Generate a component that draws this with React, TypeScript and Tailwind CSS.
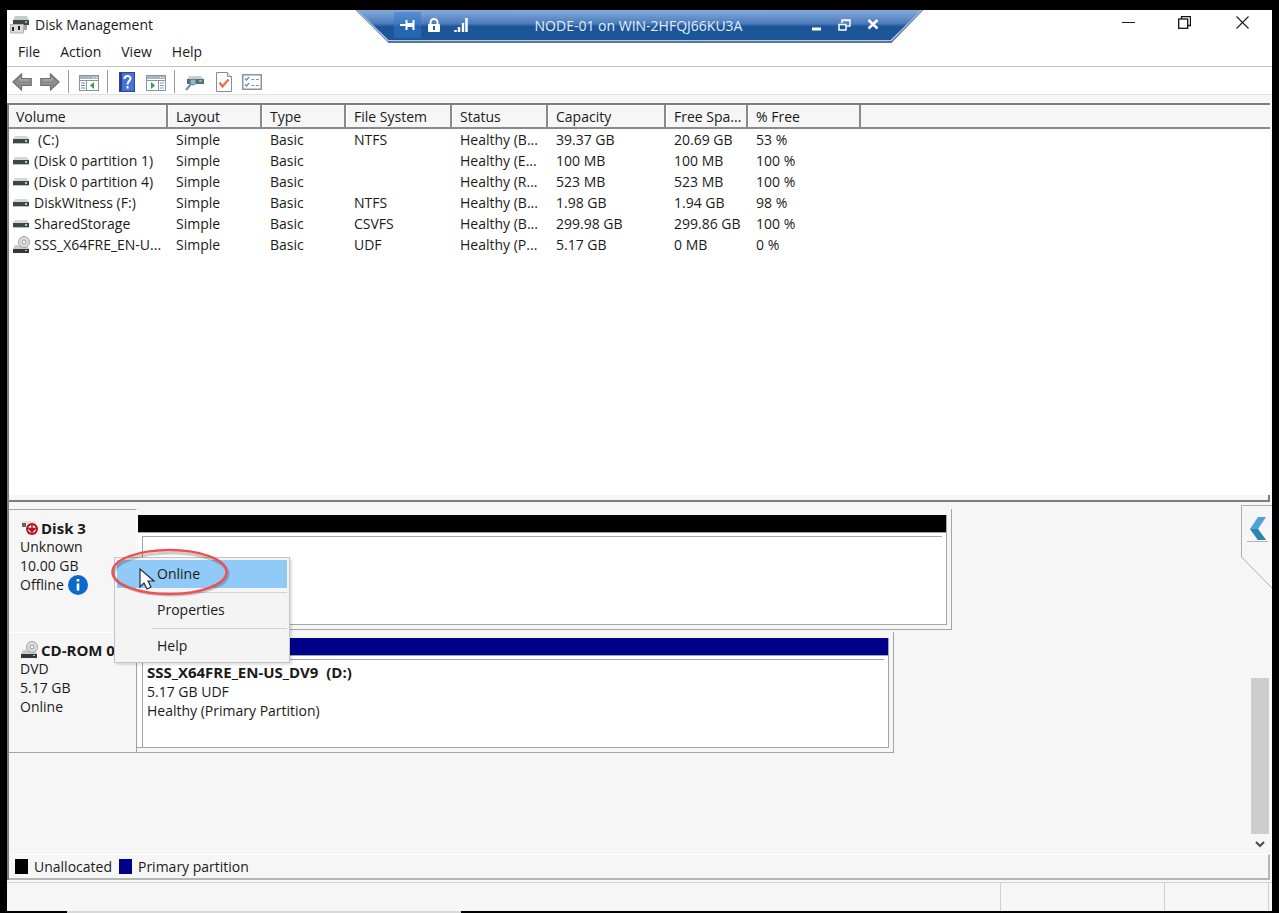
import type { ReactNode } from "react";

type Volume = {
  name: string;
  kind: "disk" | "cd";
  indent?: boolean;
  cells: string[];
};

const columns = ["Volume", "Layout", "Type", "File System", "Status", "Capacity", "Free Spa...", "% Free"];

const volumes: Volume[] = [
  { name: "(C:)", kind: "disk", indent: true, cells: ["Simple", "Basic", "NTFS", "Healthy (B...", "39.37 GB", "20.69 GB", "53 %"] },
  { name: "(Disk 0 partition 1)", kind: "disk", cells: ["Simple", "Basic", "", "Healthy (E...", "100 MB", "100 MB", "100 %"] },
  { name: "(Disk 0 partition 4)", kind: "disk", cells: ["Simple", "Basic", "", "Healthy (R...", "523 MB", "523 MB", "100 %"] },
  { name: "DiskWitness (F:)", kind: "disk", cells: ["Simple", "Basic", "NTFS", "Healthy (B...", "1.98 GB", "1.94 GB", "98 %"] },
  { name: "SharedStorage", kind: "disk", cells: ["Simple", "Basic", "CSVFS", "Healthy (B...", "299.98 GB", "299.86 GB", "100 %"] },
  { name: "SSS_X64FRE_EN-U...", kind: "cd", cells: ["Simple", "Basic", "UDF", "Healthy (P...", "5.17 GB", "0 MB", "0 %"] },
];

function DriveIcon() {
  return (
    <svg width="18" height="18" viewBox="0 0 18 18" aria-hidden="true">
      <path d="M3 5h12l2 3H1z" fill="#d6d8d7" />
      <rect x="1" y="8" width="16" height="4" fill="#3f4644" />
      <rect x="1" y="12" width="16" height="1" fill="#b9bdbb" />
      <rect x="13" y="9" width="2" height="2" fill="#8fe0ad" />
    </svg>
  );
}

function CdIcon() {
  return (
    <svg width="18" height="18" viewBox="0 0 18 18" aria-hidden="true">
      <path d="M3 9h12l2 4H1z" fill="#c9cbca" />
      <circle cx="12" cy="6" r="5.500" fill="#dcdcdc" stroke="#a3a3a3" />
      <circle cx="12" cy="6" r="2" fill="#f7f7f7" stroke="#9a9a9a" />
      <rect x="1" y="13" width="16" height="4" fill="#333837" />
      <rect x="13" y="14" width="2" height="1" fill="#8fe0ad" />
    </svg>
  );
}

function AppIcon() {
  return (
    <svg width="20" height="20" viewBox="0 0 20 20" aria-hidden="true">
      <path d="M6 1h12l2 5H4z" fill="#c3cbc8" />
      <rect x="4" y="5" width="16" height="5" fill="#3f4745" />
      <rect x="16" y="6" width="2" height="2" fill="#5fcf8c" />
      <rect x="14" y="10" width="4" height="5" fill="#a5a5a5" />
      <path d="M1.500 9.500h13v8.500h-13z" fill="#dcdcdc" stroke="#b0b0b0" />
      <rect x="3" y="12" width="2" height="4" fill="#222" />
      <rect x="9" y="11" width="2" height="4" fill="#222" />
    </svg>
  );
}

function OfflineIcon() {
  return (
    <svg width="18" height="16" viewBox="0 0 18 16" aria-hidden="true">
      <path d="M3 1h12l1 3H1z" fill="#e2e2e2" />
      <rect x="2" y="3" width="4" height="4" fill="#666" />
      <circle cx="12" cy="9" r="6" fill="#b3161b" />
      <circle cx="12" cy="9" r="3.800" fill="#fff" />
      <path d="M12 5v6M9 8.500l3 3.500 3-3.500z" fill="#b3161b" stroke="#b3161b" strokeWidth="1.500" />
    </svg>
  );
}

function ArrowIcon({ right = false }: { right?: boolean }) {
  return (
    <svg width="20" height="18" viewBox="0 0 20 18" aria-hidden="true">
      <path
        d={right ? "M19 9 10.500 1v4.500H.8v7h9.700V17z" : "M1 9 9.500 1v4.500h9.700v7H9.500V17z"}
        fill="#8e8e8e"
        stroke="#707070"
        strokeWidth="1.200"
      />
      <path d={right ? "M2 7h10V5" : "M8 5v2h10"} fill="none" stroke="#b9b9b9" />
    </svg>
  );
}

function PaneIcon({ right = false }: { right?: boolean }) {
  return (
    <svg width="20" height="18" viewBox="0 0 20 18" aria-hidden="true">
      <rect x=".5" y="1.500" width="19" height="15" fill="#fff" stroke="#8b95a0" />
      <rect x="1" y="2" width="18" height="3" fill="#aab5c0" />
      <path d="M14 3.500h1M17 3.500h1" stroke="#fff" />
      <path d="M1 6.500h18" stroke="#8b95a0" />
      {right ? (
        <>
          <path d="M12.500 7v9" stroke="#8b95a0" />
          <path d="M14 9h4M14 11.500h4M14 14h4" stroke="#7f9cc0" />
          <path d="M5 8v7l4-3.500z" fill="#35a635" />
        </>
      ) : (
        <>
          <path d="M7.500 7v9" stroke="#8b95a0" />
          <path d="M2 9h4M2 11.500h4M2 14h4" stroke="#5d86c0" />
          <path d="M15 8v7l-4-3.500z" fill="#35a635" />
        </>
      )}
    </svg>
  );
}

function HelpIcon() {
  return (
    <svg width="16" height="20" viewBox="0 0 16 20" aria-hidden="true">
      <rect x=".5" y=".5" width="15" height="19" fill="#4a72d6" stroke="#2b459b" />
      <rect x="1" y="1" width="2" height="18" fill="#243f96" />
      <path d="M5.500 7c0-4 6-4 6-.5 0 2.500-3 2.500-3 6" fill="none" stroke="#fff" strokeWidth="2" />
      <rect x="7.500" y="14" width="2" height="2.500" fill="#fff" />
    </svg>
  );
}

function RescanIcon() {
  return (
    <svg width="20" height="18" viewBox="0 0 20 18" aria-hidden="true">
      <path d="M4 2h12l3 4H2z" fill="#cbd0d0" />
      <rect x="2" y="5" width="17" height="5" fill="#5a6a70" />
      <rect x="14" y="6" width="3" height="2" fill="#63d294" />
      <circle cx="8" cy="8" r="3" fill="#8fb8cc" stroke="#60869c" />
      <path d="M6 10l-5 6" stroke="#7690a0" strokeWidth="2" />
    </svg>
  );
}

function CheckPageIcon() {
  return (
    <svg width="16" height="20" viewBox="0 0 16 20" aria-hidden="true">
      <path d="M.5.5h11l4 4v15H.5z" fill="#fff" stroke="#8c8c8c" />
      <path d="M11.500.5v4h4" fill="#eee" stroke="#8c8c8c" />
      <path d="M3.500 10.500l3 4 6-7" fill="none" stroke="#e8703a" strokeWidth="2.200" />
    </svg>
  );
}

function ListIcon() {
  return (
    <svg width="20" height="16" viewBox="0 0 20 16" aria-hidden="true">
      <rect x=".75" y=".75" width="18.500" height="14.500" fill="#fff" stroke="#8494a3" strokeWidth="1.500" />
      <path d="M3 4.500l1.500 1.500L7 3M3 10.500l1.500 1.500L7 9" fill="none" stroke="#5b8ac4" strokeWidth="1.200" />
      <path d="M9.500 5.500h3M14 5.500h3M9.500 11.500h3M14 11.500h3" stroke="#8a96a2" />
    </svg>
  );
}

function IconButton({ label, className = "", children }: { label: string; className?: string; children: ReactNode }) {
  return (
    <button type="button" aria-label={label} className={`flex items-center justify-center ${className}`}>
      {children}
    </button>
  );
}

function ConnectionBar() {
  return (
    <div className="absolute top-0 left-1/2 h-[33px] w-[568px] -translate-x-1/2 bg-[#55779f] [clip-path:polygon(0_0,100%_0,536px_100%,33px_100%)]">
      <div className="h-[31px] bg-[#b7c8de] [clip-path:polygon(1px_0,567px_0,536px_100%,32px_100%)]">
        <div className="flex h-[30px] items-center bg-linear-to-b from-[#86abdb] via-[#4a7cbc] via-45% to-[#1d5599] to-55% pr-[36px] pl-[38px] text-white [clip-path:polygon(2px_0,566px_0,535px_100%,33px_100%)]">
          <IconButton label="Pin" className="h-[26px] w-[27px] bg-[#2f77c9]/50">
            <svg width="15" height="12" viewBox="0 0 15 12" aria-hidden="true">
              <path d="M0 6h6M6.500 1v10M13.500 1v10" stroke="#fff" strokeWidth="2" />
              <path d="M7 6h6" stroke="#fff" strokeWidth="4" />
            </svg>
          </IconButton>
          <IconButton label="Connection security" className="h-[26px] w-[26px]">
            <svg width="14" height="15" viewBox="0 0 14 15" aria-hidden="true">
              <path d="M3.500 7V4.500a3.500 3.500 0 0 1 7 0V7" fill="none" stroke="#fff" strokeWidth="2" />
              <rect x="1" y="6" width="12" height="8" rx="1" fill="#fff" />
              <rect x="6" y="8" width="2" height="4" fill="#2b62a6" />
            </svg>
          </IconButton>
          <IconButton label="Connection quality" className="h-[26px] w-[28px]">
            <svg width="14" height="15" viewBox="0 0 14 15" aria-hidden="true">
              <path d="M1.500 14v-2M5 14V9M9 14V5M12.500 14V0" stroke="#fff" strokeWidth="2.500" />
            </svg>
          </IconButton>
          <span className="flex-1 pt-[2px] text-center whitespace-nowrap text-[#e2edf9]">NODE-01 on WIN-2HFQJ66KU3A</span>
          <IconButton label="Minimize session" className="h-[26px] w-[28px]">
            <svg width="10" height="14" viewBox="0 0 10 14" aria-hidden="true">
              <path d="M0 11h9" stroke="#fff" strokeWidth="3" />
            </svg>
          </IconButton>
          <IconButton label="Restore session" className="h-[26px] w-[28px]">
            <svg width="13" height="13" viewBox="0 0 13 13" aria-hidden="true">
              <path d="M4 4V1h8v6H9M4 1.500h8" fill="none" stroke="#fff" strokeWidth="1.500" />
              <path d="M1 5.500h7V11H1z" fill="none" stroke="#fff" strokeWidth="1.500" />
            </svg>
          </IconButton>
          <IconButton label="Close session" className="h-[26px] w-[29px]">
            <svg width="12" height="12" viewBox="0 0 12 12" aria-hidden="true">
              <path d="M1.500 1l9 8.500M10.500 1l-9 8.500" stroke="#fff" strokeWidth="2.500" />
            </svg>
          </IconButton>
        </div>
      </div>
    </div>
  );
}

function TitleBar() {
  return (
    <header className="relative flex h-[29px] items-center bg-white">
      <div className="flex items-center gap-[6px] pl-[2px]">
        <AppIcon />
        <h1>Disk Management</h1>
      </div>
      <ConnectionBar />
      <div className="ml-auto flex pb-1">
        <IconButton label="Minimize" className="h-6 w-[56px]">
          <svg width="13" height="13" viewBox="0 0 13 13" aria-hidden="true">
            <path d="M0 6.500h13" stroke="#222" />
          </svg>
        </IconButton>
        <IconButton label="Restore" className="h-6 w-[56px]">
          <svg width="13" height="13" viewBox="0 0 13 13" aria-hidden="true">
            <path d="M3.500 3V.5h9v9H10" fill="none" stroke="#111" strokeWidth="1.300" />
            <rect x=".7" y="3" width="9" height="9.300" fill="#fff" stroke="#111" strokeWidth="1.300" />
          </svg>
        </IconButton>
        <IconButton label="Close" className="h-6 w-[60px]">
          <svg width="13" height="13" viewBox="0 0 13 13" aria-hidden="true">
            <path d="M.5.5l12 12M12.500.5l-12 12" stroke="#222" strokeWidth="1.200" />
          </svg>
        </IconButton>
      </div>
    </header>
  );
}

function Separator() {
  return <span className="h-[23px] w-px bg-[#9c9c9c]" />;
}

function Toolbar() {
  return (
    <div className="flex h-[28px] items-center border-b border-[#e2e2e2] bg-white pt-[2px] pl-[5px]">
      <IconButton label="Back"><ArrowIcon /></IconButton>
      <IconButton label="Forward" className="mx-2"><ArrowIcon right /></IconButton>
      <Separator />
      <IconButton label="Show console tree" className="mr-2 ml-[10px] pt-[2px]"><PaneIcon /></IconButton>
      <Separator />
      <IconButton label="Help" className="mr-[11px] ml-[11px]"><HelpIcon /></IconButton>
      <IconButton label="Show action pane" className="mr-2 pt-[2px]"><PaneIcon right /></IconButton>
      <Separator />
      <IconButton label="Rescan disks" className="mr-[11px] ml-[10px] pt-[2px]"><RescanIcon /></IconButton>
      <IconButton label="Properties" className="mr-[10px]"><CheckPageIcon /></IconButton>
      <IconButton label="Settings"><ListIcon /></IconButton>
    </div>
  );
}

function VolumeTable() {
  return (
    <table className="w-full table-fixed border-separate border-spacing-0 text-left leading-[21px] whitespace-nowrap">
      <colgroup>
        <col className="w-[159px]" />
        <col className="w-[94px]" />
        <col className="w-[84px]" />
        <col className="w-[106px]" />
        <col className="w-[96px]" />
        <col className="w-[118px]" />
        <col className="w-[82px]" />
        <col className="w-[113px]" />
        <col />
      </colgroup>
      <thead className="bg-[#f6f6f6]">
        <tr>
          {columns.map((name) => (
            <th key={name} scope="col" className="h-[24px] border-r-2 border-b-2 border-[#8a8a8a] p-0 pt-px pl-[7px] font-normal shadow-[inset_1px_1px_0_#fff] not-first:pl-2">
              {name}
            </th>
          ))}
          <td className="border-b-2 border-[#8a8a8a]" />
        </tr>
      </thead>
      <tbody>
        {volumes.map((v) => (
          <tr key={v.name}>
            <td className="h-[21px] p-0 pl-[3px]">
              <span className="flex h-[21px] items-center gap-1">
                {v.kind === "cd" ? <CdIcon /> : <DriveIcon />}
                <span className={v.indent ? "pl-1" : ""}>{v.name}</span>
              </span>
            </td>
            {v.cells.map((cell, i) => (
              <td key={i} className="p-0 pl-2">{cell}</td>
            ))}
            <td />
          </tr>
        ))}
      </tbody>
    </table>
  );
}

type DiskHeaderProps = { icon: ReactNode; title: string; lines: string[]; className: string; children?: ReactNode };

function DiskHeader({ icon, title, lines, className, children }: DiskHeaderProps) {
  return (
    <div className={`w-[128px] shrink-0 border-r pl-[11px] leading-[19px] ${className}`}>
      <div className="flex h-[18px] items-center gap-[3px] text-[15px] font-bold whitespace-nowrap">
        {icon}
        {title}
      </div>
      {lines.map((l, i) => (
        <div key={l} className="flex items-center gap-1">
          {l}
          {i === lines.length - 1 && children}
        </div>
      ))}
    </div>
  );
}

function Partition({ className, barClassName, children }: { className: string; barClassName: string; children?: ReactNode }) {
  return (
    <div className={`border-r border-b border-[#a5a5a5] pt-[6px] pr-1 pb-1 ${className}`}>
      <div className="flex h-full flex-col border-r border-b border-[#a5a5a5] pl-px">
        <div className={`h-[18px] border-b border-[#a5a5a5] ${barClassName}`} />
        <div className="flex-1 bg-white pt-[3px] pr-1 pl-1">
          <div className="h-full border-t border-l border-[#a5a5a5] pt-[3px] pl-1 leading-[19px]">{children}</div>
        </div>
      </div>
    </div>
  );
}

function ContextMenu() {
  return (
    <div role="menu" className="absolute top-[55px] left-[105px] flex h-[106px] w-[176px] flex-col border border-[#c4c4c4] bg-[#f4f4f4] p-[2px] shadow-[2px_2px_2px_rgba(0,0,0,0.12)]">
      <button type="button" role="menuitem" className="h-[28px] bg-[#91c9f7] pl-[40px] text-left">Online</button>
      <div className="mt-1 mb-[2px] ml-[35px] h-px bg-[#d2d2d2]" />
      <button type="button" role="menuitem" className="h-[29px] pl-[40px] text-left">Properties</button>
      <div className="mt-1 mb-[2px] ml-[35px] h-px bg-[#d2d2d2]" />
      <button type="button" role="menuitem" className="h-[29px] pl-[40px] text-left">Help</button>
      <svg className="pointer-events-none absolute -top-[12px] -left-[6px]" width="122" height="52" viewBox="0 0 122 52" aria-hidden="true">
        <ellipse cx="62" cy="28" rx="57" ry="21" fill="none" stroke="#000" strokeOpacity=".2" strokeWidth="3" />
        <path d="M31 23v18l4-4 3 6 4-2-3-6h6z" fill="#fff" stroke="#1f2d3d" strokeWidth="1.200" />
        <ellipse cx="60.500" cy="26" rx="57" ry="22" fill="none" stroke="#ee5053" strokeWidth="2.500" />
      </svg>
    </div>
  );
}

function DiskPane() {
  return (
    <section aria-label="Disks" className="relative flex h-[352px] pt-[7px]">
      <div className="min-w-0 flex-1">
        <div className="flex h-[121px]">
          <DiskHeader
            icon={<OfflineIcon />}
            title="Disk 3"
            lines={["Unknown", "10.00 GB", "Offline"]}
            className="border-t border-t-[#a5a5a5] border-r-white pt-[9px]"
          >
            <svg width="20" height="20" viewBox="0 0 20 20" className="-my-1" aria-hidden="true">
              <circle cx="10" cy="10" r="10" fill="#0c69cc" />
              <path d="M10 8.500v7M10 4v2.500" stroke="#fff" strokeWidth="2.600" />
            </svg>
          </DiskHeader>
          <Partition className="w-[815px]" barClassName="bg-black" />
        </div>
        <div className="mt-[2px] flex h-[121px]">
          <DiskHeader
            icon={<CdIcon />}
            title="CD-ROM 0"
            lines={["DVD", "5.17 GB", "Online"]}
            className="border-t border-b border-t-white border-r-[#a5a5a5] border-b-[#a5a5a5] pt-[8px]"
          />
          <Partition className="w-[757px]" barClassName="bg-[#00008b]">
            <p className="text-[15px] font-bold whitespace-pre">SSS_X64FRE_EN-US_DV9  (D:)</p>
            <p>5.17 GB UDF</p>
            <p>Healthy (Primary Partition)</p>
          </Partition>
        </div>
      </div>
      <div className="mr-px flex w-[18px] flex-col justify-end">
        <div className="h-[156px] bg-[#cdcdcd]" />
        <IconButton label="Scroll down" className="h-[20px]">
          <svg width="10" height="8" viewBox="0 0 10 8" aria-hidden="true">
            <path d="M1 2l4 4 4-4" fill="none" stroke="#505050" strokeWidth="2.200" />
          </svg>
        </IconButton>
      </div>
      <ContextMenu />
      <button type="button" aria-label="Expand side panel" className="absolute top-[3px] -right-[2px]">
        <svg width="31" height="84" viewBox="0 0 31 84" aria-hidden="true">
          <path d="M31 .5H.5V52L31 83z" fill="#f6f6f6" />
          <path d="M31 .5H.5V52L31 83" fill="none" stroke="#adadad" />
          <path d="M17 12h8l-8 12L25 35h-8L9 24z" fill="#4ba3d6" />
          <path d="M9 24h8L25 35h-8z" fill="#2b86b4" />
          <path d="M6 36.500h21" stroke="#b9b0b0" />
        </svg>
      </button>
    </section>
  );
}

export default function App() {
  return (
    <div className="flex min-h-screen flex-col bg-black pt-[10px] pr-[7px] pl-[7px] font-['Open_Sans','Noto_Sans',sans-serif] text-[14px] leading-[20px] text-[#1a1a1a]">
      <div className="flex flex-1 flex-col bg-[#f6f6f6]">
        <TitleBar />
        <nav className="flex h-[28px] items-start gap-5 border-b border-[#c3c3c3] bg-white pt-[3px] pl-[11px]">
          <button type="button">File</button>
          <button type="button">Action</button>
          <button type="button">View</button>
          <button type="button">Help</button>
        </nav>
        <Toolbar />
        <main className="mt-2 mr-[2px] flex flex-1 flex-col border-t-2 border-l-2 border-[#7d7d7d]">
          <section aria-label="Volumes" className="flex flex-1 flex-col border-b-2 border-[#7d7d7d]">
            <div className="flex-1 bg-white">
              <VolumeTable />
            </div>
            <div className="h-[5px] border-r-2 border-[#7d7d7d]" />
          </section>
          <DiskPane />
          <footer className="flex h-[26px] items-center border-t border-r-2 border-b-2 border-t-white border-r-[#b5b5b5] border-b-[#b5b5b5] pl-[6px]">
            <span className="mr-[6px] h-[15px] w-[13px] bg-black" />
            <span className="mr-[7px]">Unallocated</span>
            <span className="mr-[6px] h-[15px] w-[13px] bg-[#00008b]" />
            <span>Primary partition</span>
          </footer>
        </main>
        <div className="mt-[2px] flex h-[29px] justify-end border-t border-[#d0d0d0]">
          <div className="w-[164px] border-l border-[#d0d0d0]" />
          <div className="w-[105px] border-r border-l border-[#d0d0d0]" />
          <div className="w-[3px]" />
        </div>
      </div>
      <div className="flex h-[2px]">
        <div className="w-[60px]" />
        <div className="w-[394px] bg-[#d9d9d9]" />
      </div>
    </div>
  );
}
